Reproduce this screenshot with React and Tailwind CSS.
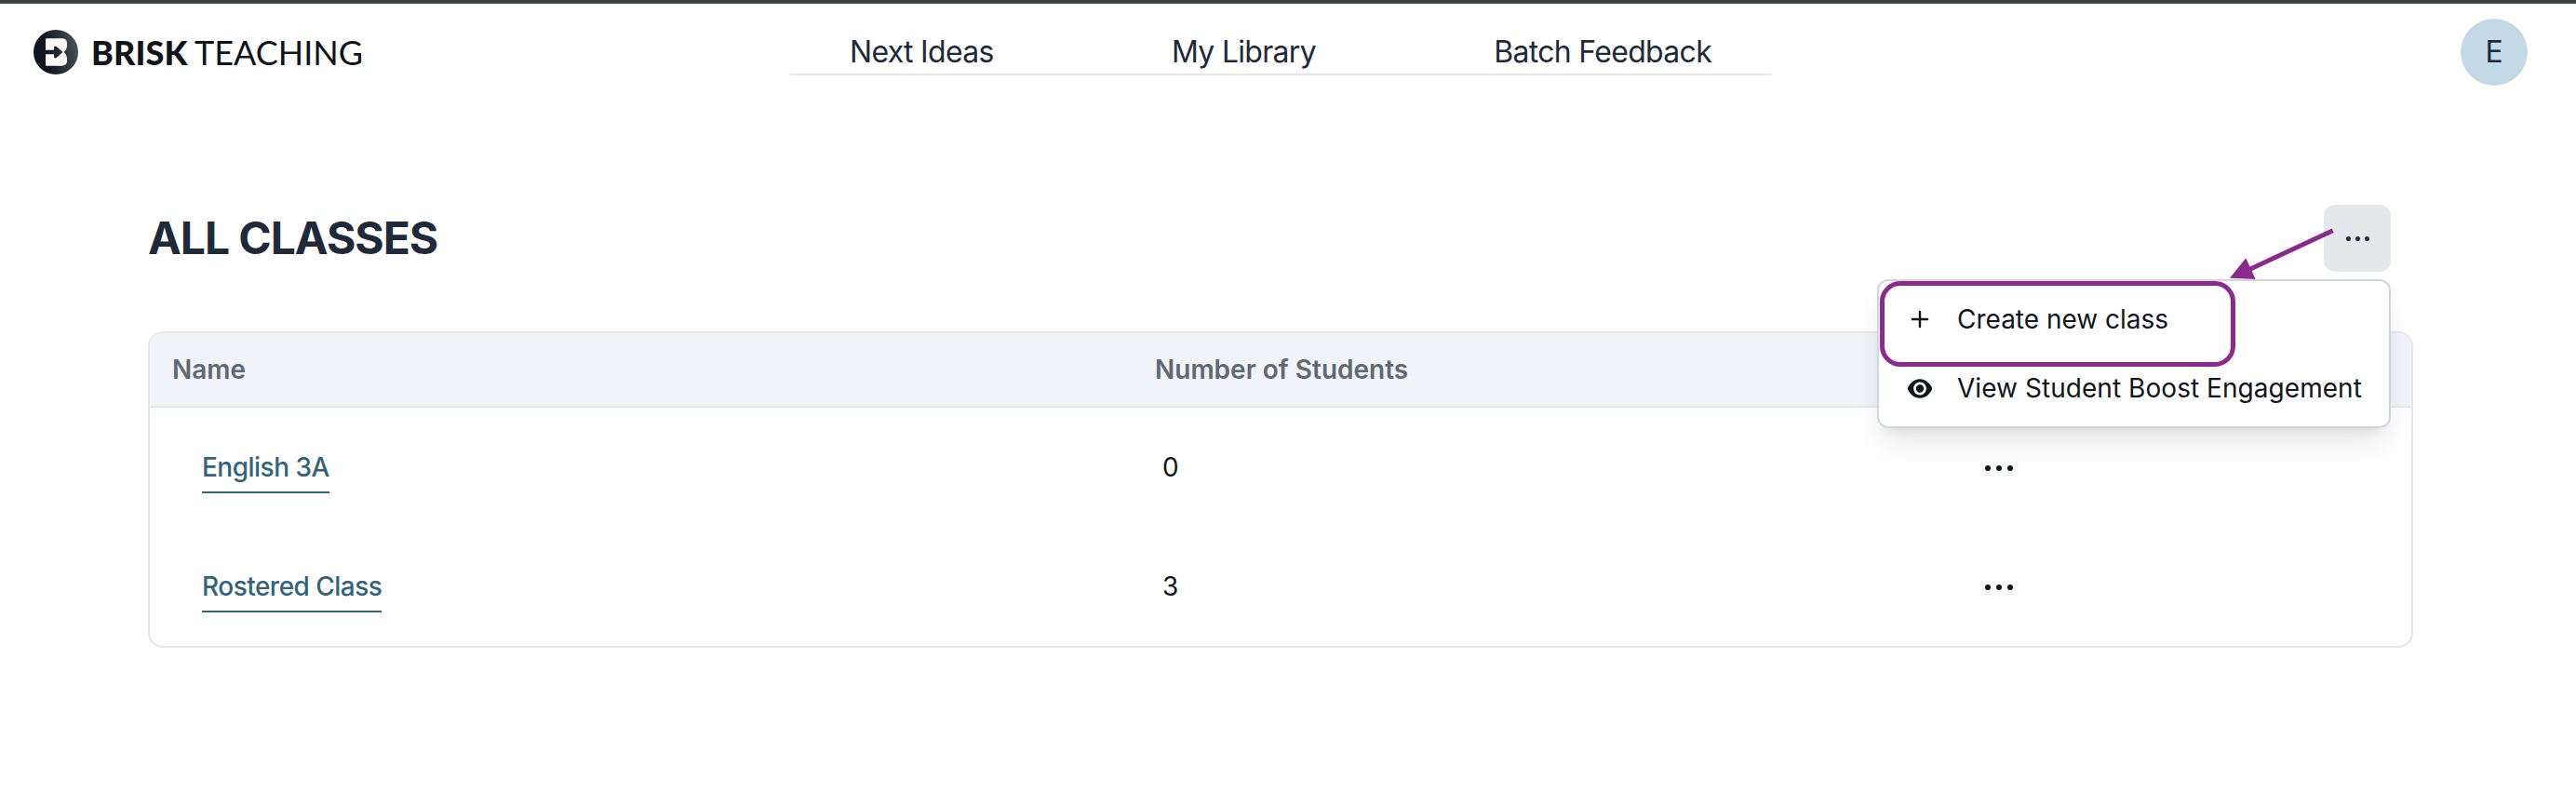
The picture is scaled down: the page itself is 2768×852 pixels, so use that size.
const rows = [
  { name: 'English 3A', count: 0 },
  { name: 'Rostered Class', count: 3 },
];

function Dots({ small }) {
  return (
    <span className={small ? 'mt-px ml-px flex gap-[5px] text-gray-800' : 'mt-[2px] flex gap-[6px] text-[#10161c]'}>
      {[0, 1, 2].map((i) => (
        <span key={i} className={small ? 'size-[5px] rounded-full bg-current' : 'size-[6px] rounded-full bg-current'} />
      ))}
    </span>
  );
}

function Logo() {
  return (
    <div className="flex w-[849px] items-center pl-9 text-[#10151b]">
      <svg viewBox="0 0 48 48" className="size-12 shrink-0">
        <defs>
          <linearGradient id="mark" x1="0.2" x2="1" y1="0.55" y2="0.4">
            <stop offset="0.1" stopColor="#0f151c" />
            <stop offset="1" stopColor="#455356" />
          </linearGradient>
        </defs>
        <circle cx="24" cy="24" r="24" fill="url(#mark)" />
        <path
          d="M14 9.300H30.500C34 9.300 36 11.500 36 14.500V17C36 20 34.500 22 32.500 24C34.500 26 36 28 36 31V33.500C36 36.500 34 38.700 30.500 38.700H14Q13 38.700 13 37.700V26.200H22V28.800Q22.300 31.300 24.500 30.200L31.500 24L24.500 17.800Q22.300 16.700 22 19.200V21.800H13V10.300Q13 9.300 14 9.300Z"
          fill="#fdf9f9"
        />
      </svg>
      <span className="ml-[14px] w-[111px] font-['Lato',sans-serif] text-[36px] leading-none font-black tracking-[0.1px]">BRISK</span>
      <span className="font-['Lato',sans-serif] text-[36px] leading-none">TEACHING</span>
    </div>
  );
}

export default function App() {
  return (
    <div className="h-[852px] w-[2768px] overflow-hidden bg-white font-['Inter',sans-serif] text-[28px] text-[#10161c]">
      <div className="h-1 border-b-2 border-[#404b47] bg-[#30453f]" />
      <header className="flex h-[104px] items-center">
        <Logo />
        <nav className="mt-7 flex h-[49px] w-[1054px] items-center justify-between self-start border-b-2 border-gray-200 px-16 text-[32px] tracking-[-0.7px] text-gray-800">
          <span>Next Ideas</span>
          <span>My Library</span>
          <span>Batch Feedback</span>
        </nav>
        <div className="mr-[52px] ml-auto flex size-[72px] items-center justify-center rounded-full bg-[#c2dae5] text-[32px] text-gray-800">E</div>
      </header>

      <main className="mt-28 ml-[159px] w-[2434px]">
        <div className="flex h-[72px] items-center justify-between pr-6">
          <h1 className="text-[48px] leading-none font-bold tracking-[-1.05px] text-gray-800">ALL CLASSES</h1>
          <div className="relative">
            <button className="flex size-[72px] items-center justify-center rounded-xl bg-gray-200">
              <Dots small />
            </button>
            <div className="absolute top-[80px] right-0 z-10 flex h-[160px] w-[552px] flex-col rounded-xl border-2 border-gray-300 bg-white pt-[4px] shadow-[0_20px_30px_-6px_rgba(0,0,0,0.1),0_8px_12px_-8px_rgba(0,0,0,0.1)]">
              <div className="flex h-[74px] items-center pl-[30px]">
                <svg viewBox="0 0 28 28" className="size-7" stroke="currentColor" strokeWidth="2.400" strokeLinecap="round">
                  <path d="M14 5.900v16.200M5.900 14h16.200" />
                </svg>
                <span className="ml-[26px] whitespace-nowrap">Create new class</span>
              </div>
              <div className="flex h-[74px] items-center pl-[30px]">
                <svg viewBox="0 0 28 28" className="size-7" fill="currentColor">
                  <path fillRule="evenodd" d="M14 4.300c5.800 0 10.300 4 13 9.200q.4 1 0 2C24.300 20.800 19.800 24.800 14 24.800S3.700 20.800 1 15.500q-.4-1 0-2C3.700 8.300 8.200 4.300 14 4.300zm0 3.300a6.900 6.900 0 1 0 0 13.800 6.900 6.900 0 0 0 0-13.800zm0 2.700a4.200 4.200 0 1 1 0 8.400 4.200 4.200 0 0 1 0-8.400z" />
                </svg>
                <span className="ml-[26px] tracking-[0.05px] whitespace-nowrap">View Student Boost Engagement</span>
              </div>
              <div className="absolute top-0 left-[1px] h-[92px] w-[382px] rounded-[22px] border-[5px] border-[#8a2a8d]" />
              <svg viewBox="0 0 120 60" className="absolute top-[-60px] left-[375px] h-[60px] w-[120px] overflow-visible">
                <path d="M112.700 5.700L22 48" stroke="#8a2a8d" strokeWidth="5" />
                <path d="M2 56.700l17.300-21.400 10.400 22.700z" fill="#8a2a8d" />
              </svg>
            </div>
          </div>
        </div>

        <section className="mt-16 h-[340px] overflow-hidden rounded-2xl border-2 border-gray-200">
          <div className="flex h-[80px] items-center border-b-2 border-gray-200 bg-[#f0f3f8] pl-6 font-semibold text-[#5f6972]">
            <span className="w-[1056px]">Name</span>
            <span>Number of Students</span>
          </div>
          {rows.map((row) => (
            <div key={row.name} className="flex h-32 items-center pl-14">
              <div className="flex w-[1032px]">
                <a className="border-b-2 border-[#31647b] pt-[7px] pb-[5px] leading-[42px] font-medium tracking-[-0.52px] text-[#31647b]">{row.name}</a>
              </div>
              <span className="w-[884px]">{row.count}</span>
              <Dots />
            </div>
          ))}
        </section>
      </main>
    </div>
  );
}
